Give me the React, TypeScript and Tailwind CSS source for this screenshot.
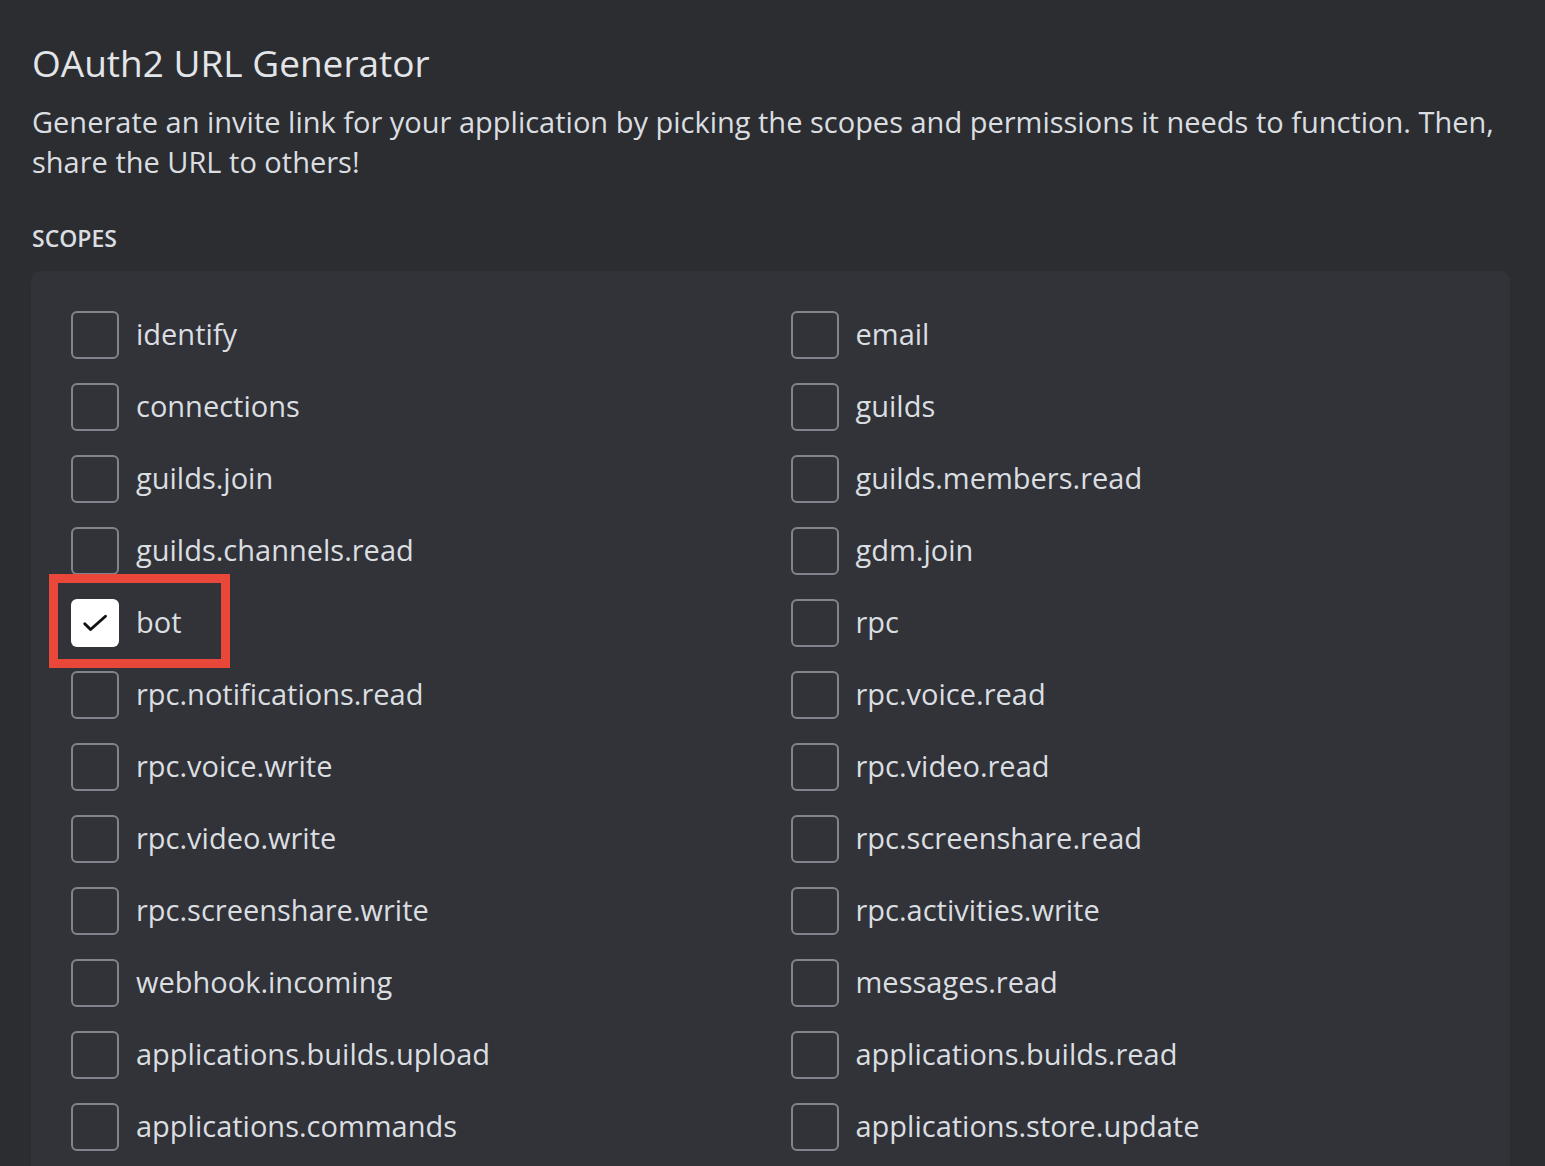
const scopes: [string, string][] = [
  ["identify", "email"],
  ["connections", "guilds"],
  ["guilds.join", "guilds.members.read"],
  ["guilds.channels.read", "gdm.join"],
  ["bot", "rpc"],
  ["rpc.notifications.read", "rpc.voice.read"],
  ["rpc.voice.write", "rpc.video.read"],
  ["rpc.video.write", "rpc.screenshare.read"],
  ["rpc.screenshare.write", "rpc.activities.write"],
  ["webhook.incoming", "messages.read"],
  ["applications.builds.upload", "applications.builds.read"],
  ["applications.commands", "applications.store.update"],
];

function Scope({ name, checked }: { name: string; checked?: boolean }) {
  return (
    <label className="relative flex h-12 items-center gap-[17px]">
      {checked ? (
        <span className="flex h-12 w-12 shrink-0 items-center justify-center rounded-md bg-white">
          <svg width="28" height="28" viewBox="0 0 24 24" fill="none">
            <path d="M3.2 12.6l5 5L21 6.2" stroke="#111214" strokeWidth="2.5" strokeLinecap="round" strokeLinejoin="round" />
          </svg>
        </span>
      ) : (
        <span className="h-12 w-12 shrink-0 rounded-md border-2 border-[#80848e]" />
      )}
      <span className="pb-[4px] text-[29px] leading-none text-[#dbdee1]">{name}</span>
      {checked && (
        <span className="pointer-events-none absolute left-[-22px] top-[-25px] h-[94px] w-[181px] border-[9px] border-[#e8473a]" />
      )}
    </label>
  );
}

export default function App() {
  return (
    <div
      className="min-h-screen bg-[#2b2d31] pl-[31px] pr-[35px] pt-[39px]"
      style={{ fontFamily: '"Open Sans", sans-serif' }}
    >
      <h1 className="pl-px text-[37px] leading-[48px] text-[#e3e5e8]">OAuth2 URL Generator</h1>
      <p className="mt-[15px] pl-px text-[29px] leading-[40px] text-[#dbdee1]">
        Generate an invite link for your application by picking the scopes and permissions it needs to function. Then,
        share the URL to others!
      </p>
      <div className="mt-[42px] pl-px text-[23px] font-semibold leading-[28px] text-[#dbdee1]">SCOPES</div>
      <div className="mt-[19px] rounded-[10px] bg-[#313338] px-10 pt-10 pb-10">
        <div className="grid grid-cols-2 gap-x-10 gap-y-6">
          {scopes.map(([a, b]) => [
            <Scope key={a} name={a} checked={a === "bot"} />,
            <Scope key={b} name={b} />,
          ])}
        </div>
      </div>
    </div>
  );
}
